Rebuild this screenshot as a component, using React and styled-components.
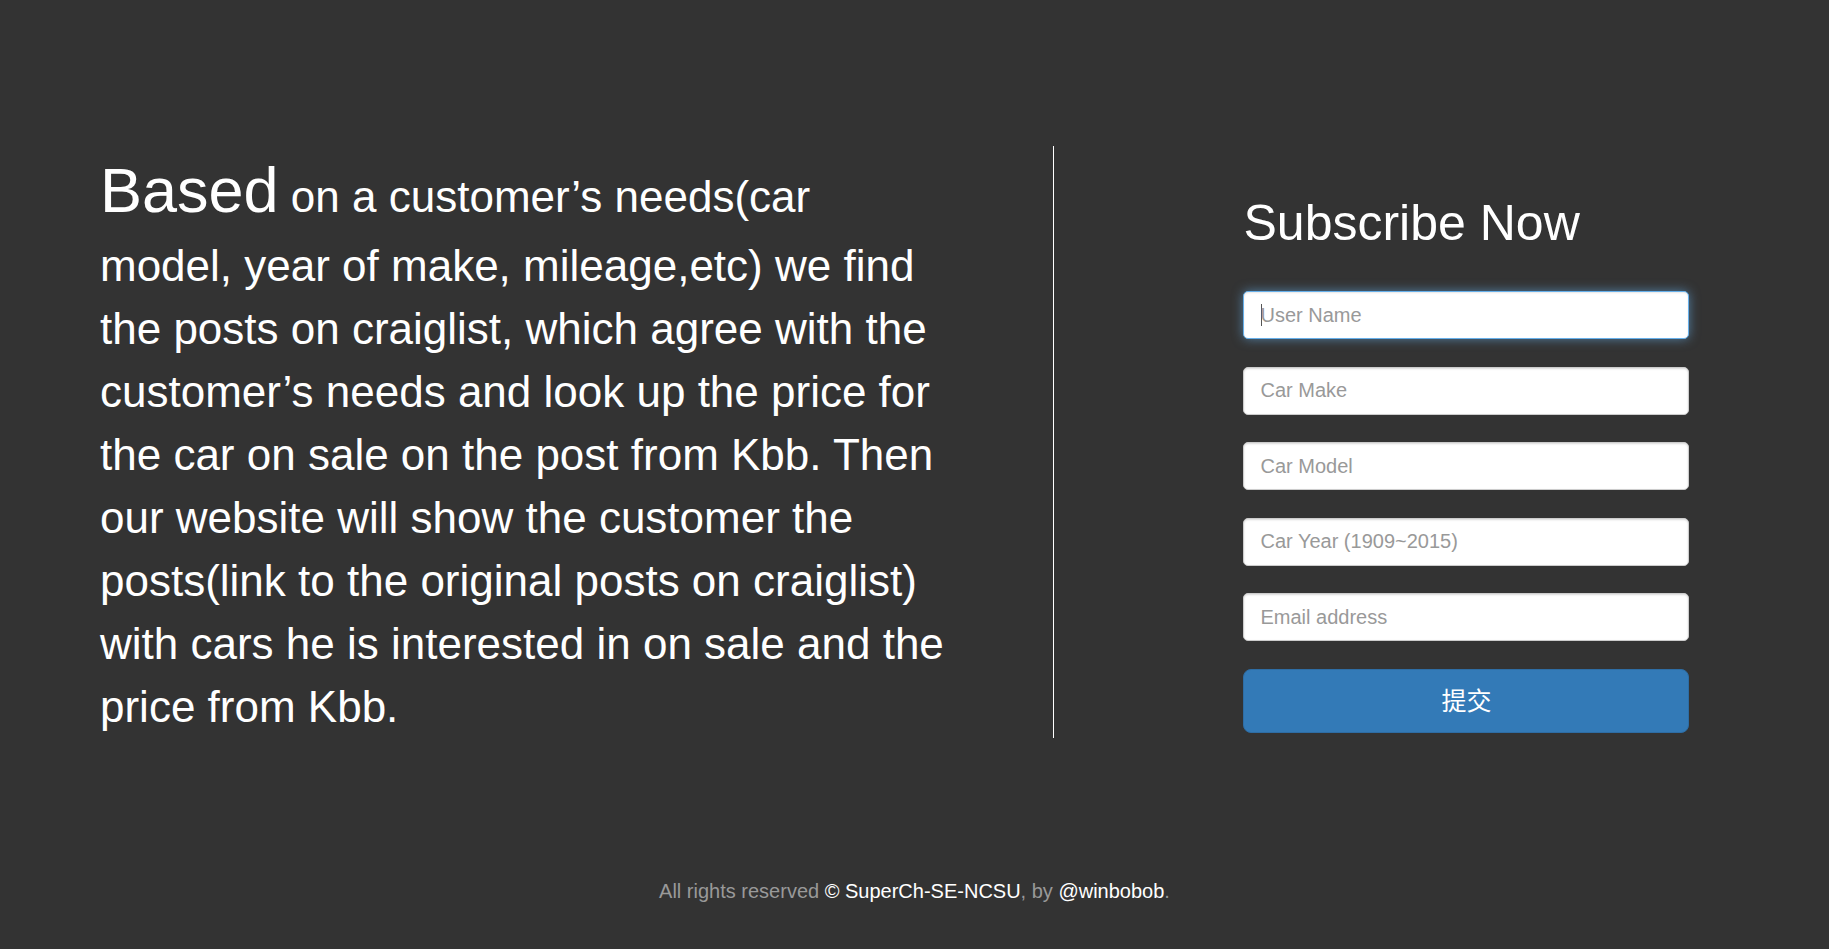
import React from "react";
import styled, { createGlobalStyle } from "styled-components";

const GlobalStyle = createGlobalStyle`
  *, *::before, *::after { box-sizing: border-box; }
  body {
    margin: 0;
    background: #333;
    color: #fff;
    font-family: "Liberation Sans", Arial, "Noto Sans CJK SC", sans-serif;
    font-size: 20px;
  }
`;

const Page = styled.div`
  min-height: 100vh;
  padding-top: 146px;
  display: flex;
  flex-direction: column;
`;

const Columns = styled.main`
  display: grid;
  grid-template-columns: 57.6% 1fr;
`;

const Intro = styled.section`
  padding: 0 100px;
  border-right: 1px solid #fff;
`;

const Description = styled.p`
  margin: 0;
  font-size: 44px;
  line-height: 63px;
`;

const Lead = styled.span`
  font-size: 63px;
  line-height: 88px;
`;

const Signup = styled.section`
  padding: 47px 18% 0 24.5%;
`;

const Title = styled.h1`
  margin: 0 0 38px;
  font-size: 50px;
  line-height: 60px;
  font-weight: 400;
  white-space: nowrap;
`;

const Form = styled.form`
  display: grid;
  align-content: space-between;
  min-height: 442px;
`;

const Field = styled.input`
  width: 100%;
  height: 48px;
  padding: 8px 16px;
  border: 1px solid #ccc;
  border-radius: 5px;
  background: #fff;
  color: #555;
  font: inherit;
  box-shadow: inset 0 1px 2px rgba(0, 0, 0, 0.15);
  outline: none;

  &::placeholder { color: #999; opacity: 1; }
  &:focus {
    border-color: #66afe9;
    box-shadow: inset 0 1px 2px rgba(0, 0, 0, 0.1), 0 0 11px rgba(102, 175, 233, 0.6);
  }
  /* steady insertion bar while the focused field is empty */
  &:focus:placeholder-shown {
    caret-color: transparent;
    background: linear-gradient(#555, #555) 17px 50% / 1px 22px no-repeat #fff;
  }
`;

const Submit = styled.button`
  width: 100%;
  height: 64px;
  padding: 0 16px 4px;
  border: 1px solid #2e6da4;
  border-radius: 8px;
  background: #337ab7;
  color: #fff;
  font-family: "Liberation Sans", "Noto Sans CJK SC", sans-serif;
  font-size: 25px;
  cursor: pointer;
`;

const Footer = styled.footer`
  margin-top: 138px;
  padding-bottom: 40px;
  line-height: 30px;
  text-align: center;
  color: #999;
`;

const FooterLink = styled.a`
  color: #fff;
  text-decoration: none;
`;

const fields = [
  { name: "username", label: "User Name", type: "text" },
  { name: "make", label: "Car Make", type: "text" },
  { name: "model", label: "Car Model", type: "text" },
  { name: "year", label: "Car Year (1909~2015)", type: "text" },
  { name: "email", label: "Email address", type: "email" },
];

export default function App() {
  return (
    <Page>
      <GlobalStyle />
      <Columns>
        <Intro>
          <Description>
            <Lead>Based</Lead> on a customer’s needs(car model, year of make,
            mileage,etc) we find the posts on craiglist, which agree with the
            customer’s needs and look up the price for the car on sale on the
            post from Kbb. Then our website will show the customer the
            posts(link to the original posts on craiglist) with cars he is
            interested in on sale and the price from Kbb.
          </Description>
        </Intro>
        <Signup>
          <Title>Subscribe Now</Title>
          <Form onSubmit={(event) => event.preventDefault()}>
            {fields.map((field, index) => (
              <Field
                key={field.name}
                name={field.name}
                type={field.type}
                placeholder={field.label}
                aria-label={field.label}
                autoFocus={index === 0}
              />
            ))}
            <Submit type="submit">提交</Submit>
          </Form>
        </Signup>
      </Columns>
      <Footer>
        All rights reserved <FooterLink href="#">© SuperCh-SE-NCSU</FooterLink>, by{" "}
        <FooterLink href="#">@winbobob</FooterLink>.
      </Footer>
    </Page>
  );
}
